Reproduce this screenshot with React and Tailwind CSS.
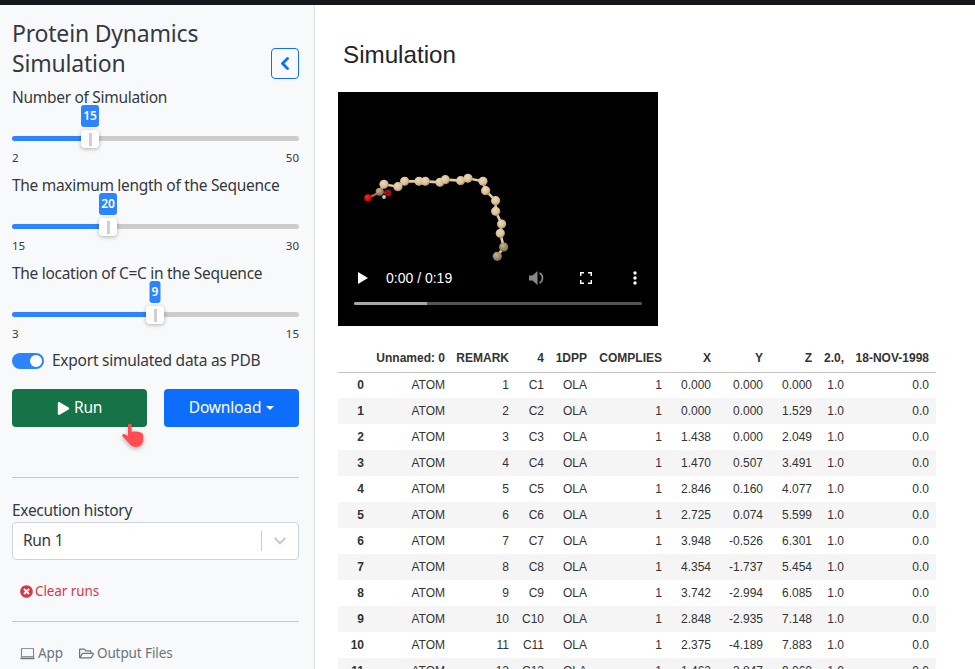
import React from "react";
import { FaChevronDown, FaRegFolderOpen, FaPlay, FaTimesCircle } from "react-icons/fa";
import { BsLaptop } from "react-icons/bs";

const sans = "font-['Noto_Sans',sans-serif]";
const rows = [
  [0, 1, "C1", "0.000", "0.000", "0.000"],
  [1, 2, "C2", "0.000", "0.000", "1.529"],
  [2, 3, "C3", "1.438", "0.000", "2.049"],
  [3, 4, "C4", "1.470", "0.507", "3.491"],
  [4, 5, "C5", "2.846", "0.160", "4.077"],
  [5, 6, "C6", "2.725", "0.074", "5.599"],
  [6, 7, "C7", "3.948", "-0.526", "6.301"],
  [7, 8, "C8", "4.354", "-1.737", "5.454"],
  [8, 9, "C9", "3.742", "-2.994", "6.085"],
  [9, 10, "C10", "2.848", "-2.935", "7.148"],
  [10, 11, "C11", "2.375", "-4.189", "7.883"],
  [11, 12, "C12", "1.462", "-3.847", "9.060"],
];
const headers = ["", "Unnamed: 0", "REMARK", "4", "1DPP", "COMPLIES", "X", "Y", "Z", "2.0,", "18-NOV-1998"];
const widths = ["w-[33px]", "w-[81px]", "w-[64px]", "w-[35px]", "w-[43px]", "w-[75px]", "w-[49px]", "w-[52px]", "w-[49px]", "w-[32px]", "w-[85px]"];

const atoms = [
  [125, 125, 4, "d"], [138, 103, 4.6, "t"], [180, 110, 4.6, "t"], [200, 94, 4.6, "t"], [243, 94, 4.6, "t"], [262, 94, 4.6, "t"],
  [306, 97, 4.6, "t"], [322, 89, 4.6, "t"], [368, 92, 4.6, "t"], [390, 85, 4.6, "t"], [435, 94, 4.6, "t"], [443, 122, 4.6, "t"],
  [473, 152, 4.6, "t"], [473, 184, 4.6, "t"], [491, 222, 4.6, "t"], [487, 250, 4.6, "t"], [497, 291, 4.6, "d"], [478, 319, 4.6, "d"],
];

function Molecule() {
  const pts = atoms.map(([x, y, r, k]) => ({ x: x / 3, y: 58 + y / 3, r, k }));
  const line = pts.map((p) => `${p.x},${p.y}`).join(" ");
  return (
    <svg className="absolute left-0 top-0" width="320" height="234" viewBox="0 0 320 234">
      <defs>
        <radialGradient id="tan" cx="40%" cy="35%" r="70%">
          <stop offset="0%" stopColor="#ecd9ba" />
          <stop offset="70%" stopColor="#d6bb92" />
          <stop offset="100%" stopColor="#7f6c4e" />
        </radialGradient>
        <radialGradient id="dark" cx="40%" cy="35%" r="70%">
          <stop offset="0%" stopColor="#c6b492" />
          <stop offset="100%" stopColor="#75674a" />
        </radialGradient>
        <radialGradient id="red" cx="40%" cy="35%" r="70%">
          <stop offset="0%" stopColor="#ff2a1a" />
          <stop offset="100%" stopColor="#a80000" />
        </radialGradient>
      </defs>
      <polyline points={line} fill="none" stroke="#e2cba5" strokeWidth="2.6" />
      <line x1="30" y1="106" x2="42" y2="100" stroke="#c06040" strokeWidth="2.2" />
      <line x1="42" y1="100" x2="50" y2="101" stroke="#a04030" strokeWidth="2" />
      <circle cx="50" cy="101" r="3.4" fill="#a01008" />
      <circle cx="46" cy="105" r="1.9" fill="#c8ccd0" />
      <circle cx="30" cy="106" r="3.8" fill="url(#red)" />
      {pts.map((p, i) => (
        <circle key={i} cx={p.x} cy={p.y} r={p.r} fill={p.k === "d" ? "url(#dark)" : "url(#tan)"} />
      ))}
    </svg>
  );
}

function Slider({ label, min, max, value, center }) {
  const wide = String(value).length > 1;
  return (
    <div className="mb-[7px]">
      <div className="h-6 text-[15.5px] leading-6 tracking-[-0.3px] text-[#343a40] whitespace-nowrap">{label}</div>
      <div className="relative mt-[27px] h-[5px] rounded-full bg-[#cccccc]">
        <div className="h-full rounded-l-full bg-[#2c84ff]" style={{ width: center - 12 }} />
        <div
          className={`absolute top-[-31px] flex h-[22px] -translate-x-1/2 items-center justify-center rounded-[3px] bg-[#2c84ff] text-[12px] font-semibold text-white ${wide ? "w-[18px]" : "w-[11px]"}`}
          style={{ left: center - 12 }}
        >
          {value}
        </div>
        <div
          className="absolute top-[-6px] flex h-[18px] w-[18px] -translate-x-1/2 items-center justify-center rounded-[4px] bg-white shadow-[0_1px_4px_rgba(0,0,0,0.3)]"
          style={{ left: center - 12 }}
        >
          <div className="h-[13px] w-[3px] bg-[#cfcfcf]" />
        </div>
      </div>
      <div className="mt-[9px] flex h-4 justify-between text-[11.5px] leading-4 text-[#343a40]">
        <span>{min}</span>
        <span>{max}</span>
      </div>
    </div>
  );
}

function HandCursor() {
  return (
    <svg className="absolute left-[120px] top-[416px] drop-shadow-[0_2px_2px_rgba(0,0,0,0.3)]" width="26" height="28" viewBox="0 0 26 28">
      <path
        d="M8 4 C8 2.2 11.6 2.2 11.6 4 L11.6 11 C15 10 20 10.6 22 12 C24 13.5 23.4 19 22.6 21.5 C21.6 24.6 18.6 26 15.6 26 C12 26 10 24 8.4 21.6 L2.6 15.4 C1.6 14 3 12.4 4.8 13.2 L8 15 Z"
        fill="#ff4b52"
      />
    </svg>
  );
}

function Sidebar() {
  return (
    <aside className={`relative h-full w-[315px] shrink-0 border-r border-[#dee2e6] bg-[#f8f9fa] pl-3 pr-[15px] pt-[13px] ${sans}`}>
      <div className="flex items-end justify-between">
        <h1 className="w-[240px] text-[23px] leading-[30px] tracking-[-0.2px] text-[#343a40]">Protein Dynamics Simulation</h1>
        <button className="mb-[-1px] flex h-[31px] w-[28px] items-center justify-center rounded-[4px] border border-[#0d6efd] text-[#0d6efd]">
          <svg width="10" height="13" viewBox="0 0 10 13">
            <path d="M7.5 1.5 L2.5 6.5 L7.5 11.5" fill="none" stroke="currentColor" strokeWidth="2.8" strokeLinecap="round" strokeLinejoin="round" />
          </svg>
        </button>
      </div>
      <div className="mt-[7px]">
        <Slider label="Number of Simulation" min="2" max="50" value={15} center={90} />
        <Slider label="The maximum length of the Sequence" min="15" max="30" value={20} center={108} />
        <Slider label="The location of C=C in the Sequence" min="3" max="15" value={9} center={155} />
      </div>
      <div className="mt-[11px] flex h-4 items-center gap-2">
        <div className="flex h-4 w-8 items-center justify-end rounded-full bg-[#2c84ff] pr-[2px]">
          <div className="h-3 w-3 rounded-full bg-white" />
        </div>
        <span className="text-[15.5px] tracking-[-0.25px] text-[#343a40]">Export simulated data as PDB</span>
      </div>
      <div className="mt-5 flex gap-[17px]">
        <button className="flex h-[38px] w-[135px] items-center justify-center gap-1 rounded-[4px] bg-[#157347] text-[15.5px] tracking-[-0.3px] text-white">
          <FaPlay size={13} />
          <span>Run</span>
        </button>
        <button className="flex h-[38px] w-[135px] items-center justify-center gap-[5px] rounded-[4px] bg-[#0d6efd] text-[15.5px] tracking-[-0.15px] text-white">
          <span>Download</span>
          <span className="h-0 w-0 border-x-[4.5px] border-t-[4.5px] border-x-transparent border-t-white" />
        </button>
      </div>
      <HandCursor />
      <hr className="mt-[50px] border-t border-[#c6c7c8]" />
      <div className="mt-5 h-6 text-[15.5px] leading-6 tracking-[-0.3px] text-[#343a40]">Execution history</div>
      <div className="flex h-[38px] items-center rounded-[4px] border border-[#ced4da] bg-white pl-[10px] text-[15.5px] tracking-[-0.3px] text-[#343a40]">
        <span className="flex-1">Run 1</span>
        <span className="h-5 w-px bg-[#cccccc]" />
        <span className="flex w-9 justify-center text-[#cccccc]">
          <FaChevronDown size={14} />
        </span>
      </div>
      <div className="mt-[21px] flex h-[20px] items-center gap-[2px] pl-2 text-[13.5px] tracking-[-0.1px] text-[#dc3545]">
        <FaTimesCircle size={13} />
        <span>Clear runs</span>
      </div>
      <hr className="mt-5 border-t border-[#c6c7c8]" />
      <div className="mt-[21px] flex items-center gap-4 pl-2 text-[13.5px] tracking-[-0.1px] text-[#6c757d]">
        <span className="flex items-center gap-[3px]">
          <BsLaptop size={15} />
          App
        </span>
        <span className="flex items-center gap-[3px]">
          <FaRegFolderOpen size={15} />
          Output Files
        </span>
      </div>
    </aside>
  );
}

function Video() {
  return (
    <div className="relative h-[234px] w-[320px] bg-black font-['Liberation_Sans',sans-serif]">
      <Molecule />
      <div className="absolute inset-x-0 bottom-0 h-[73px] px-4">
        <div className="flex h-[50px] items-center text-white">
          <svg width="12" height="14" viewBox="0 0 12 14" className="ml-[3px]">
            <path d="M1 1 L11 7 L1 13 Z" fill="white" />
          </svg>
          <span className="ml-[17px] text-[14px]">0:00 / 0:19</span>
          <svg width="18" height="18" viewBox="0 0 18 18" className="ml-[76px]">
            <path d="M1 6.5 H4.5 L9.5 2 V16 L4.5 11.5 H1 Z" fill="#8a8a8a" />
            <path d="M11.5 4 C15.5 6 15.5 12 11.5 14" stroke="#8a8a8a" strokeWidth="1.6" fill="none" />
          </svg>
          <svg width="12" height="12" viewBox="0 0 12 12" className="ml-[34px]">
            <path d="M0.7 4 V0.7 H4 M8 0.7 H11.3 V4 M11.3 8 V11.3 H8 M4 11.3 H0.7 V8" stroke="white" strokeWidth="1.5" fill="none" />
          </svg>
          <svg width="4" height="14" viewBox="0 0 4 14" className="ml-[41px]">
            <circle cx="2" cy="2" r="1.7" fill="white" />
            <circle cx="2" cy="7" r="1.7" fill="white" />
            <circle cx="2" cy="12" r="1.7" fill="white" />
          </svg>
        </div>
        <div className="mt-[-1px] h-[3px] w-[288px] rounded-full bg-[#555555]">
          <div className="h-full w-[73px] rounded-l-full bg-[#a8a8a8]" />
        </div>
      </div>
    </div>
  );
}

function DataTable() {
  return (
    <table className="mt-[19px] w-[598px] table-fixed border-collapse text-right font-['Liberation_Sans',sans-serif] text-[12px] text-[#333333]">
      <colgroup>
        {widths.map((w, i) => (
          <col key={i} className={w} />
        ))}
      </colgroup>
      <thead>
        <tr className="h-[27px] border-b-[1.5px] border-[#c4c4c4]">
          {headers.map((h, i) => (
            <th key={i} className="pb-px pr-[7px] font-bold whitespace-nowrap">{h}</th>
          ))}
        </tr>
      </thead>
      <tbody>
        {rows.map((r, i) => (
          <tr key={i} className={`h-[26px] ${i % 2 ? "bg-[#f5f5f5]" : "bg-white"}`}>
            <td className="pr-[7px] font-bold">{r[0]}</td>
            <td className="pr-[7px]">ATOM</td>
            <td className="pr-[7px]">{r[1]}</td>
            <td className="pr-[7px]">{r[2]}</td>
            <td className="pr-[7px]">OLA</td>
            <td className="pr-[7px]">1</td>
            <td className="pr-[7px]">{r[3]}</td>
            <td className="pr-[7px]">{r[4]}</td>
            <td className="pr-[7px]">{r[5]}</td>
            <td className="pr-[7px]">1.0</td>
            <td className="pr-[7px]">0.0</td>
          </tr>
        ))}
      </tbody>
    </table>
  );
}

export default function App() {
  return (
    <div className="flex h-[669px] w-[975px] flex-col overflow-hidden bg-white">
      <div className="h-[5px] shrink-0 bg-[#15191d]" />
      <div className="flex min-h-0 flex-1">
        <Sidebar />
        <main className="min-w-0 flex-1 pl-[23px]">
          <h2 className="ml-[5px] mt-[35px] h-[52px] font-['Liberation_Sans',sans-serif] text-[24.2px] leading-[30px] text-[#212529]">Simulation</h2>
          <Video />
          <DataTable />
        </main>
      </div>
    </div>
  );
}
